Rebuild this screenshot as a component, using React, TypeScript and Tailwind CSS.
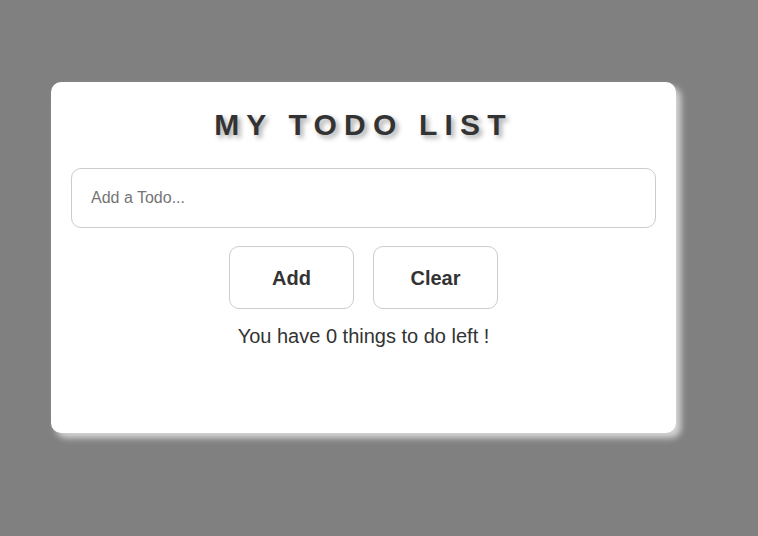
import { useState } from 'react'

export default function App() {
  const [todos, setTodos] = useState<string[]>([])
  const [text, setText] = useState('')

  const addTodo = () => {
    if (!text.trim()) return
    setTodos((current) => [...current, text.trim()])
    setText('')
  }

  return (
    <div className="min-h-[536px] w-full bg-[#808080] pt-[82px] pl-[51px] font-['Liberation_Sans',Arial,sans-serif]">
      <div className="flex h-[351px] w-[625px] flex-col items-center rounded-[10px] bg-white px-5 pt-[25px] shadow-[5px_5px_6px_#d4d4d4]">
        <h1 className="text-[30px] font-bold leading-[36px] tracking-[7.2px] text-[#333] [text-shadow:3px_3px_5px_rgba(0,0,0,0.35)]">
          MY TODO LIST
        </h1>

        <input
          value={text}
          onChange={(e) => setText(e.target.value)}
          placeholder="Add a Todo..."
          className="mt-[25px] h-[60px] w-full rounded-[10px] border border-[#ccc] pr-5 pl-[19px] text-base text-[#333] outline-none placeholder:text-[#757575]"
        />

        <div className="mt-[18px] flex gap-[19px]">
          <button
            type="button"
            onClick={addTodo}
            className="h-[63px] w-[125px] rounded-[10px] border border-[#ccc] bg-white text-[20px] font-bold text-[#333]"
          >
            Add
          </button>
          <button
            type="button"
            onClick={() => setTodos([])}
            className="h-[63px] w-[125px] rounded-[10px] border border-[#ccc] bg-white text-[20px] font-bold text-[#333]"
          >
            Clear
          </button>
        </div>

        <p className="mt-[16px] text-[20px] leading-[23px] text-[#333]">
          You have {todos.length} things to do left !
        </p>
      </div>
    </div>
  )
}
